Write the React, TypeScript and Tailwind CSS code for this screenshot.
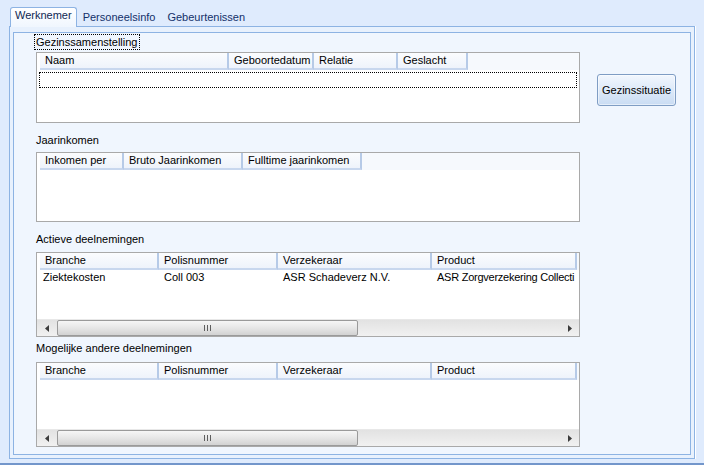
import React from 'react';

type Col = { title: string; w: number };

const famCols: Col[] = [
    { title: 'Naam', w: 189 },
    { title: 'Geboortedatum', w: 85 },
    { title: 'Relatie', w: 84 },
    { title: 'Geslacht', w: 70 },
];

const incomeCols: Col[] = [
    { title: 'Inkomen per', w: 84 },
    { title: 'Bruto Jaarinkomen', w: 119 },
    { title: 'Fulltime jaarinkomen', w: 119 },
];

const polisCols: Col[] = [
    { title: 'Branche', w: 119 },
    { title: 'Polisnummer', w: 119 },
    { title: 'Verzekeraar', w: 154 },
    { title: 'Product', w: 145 },
];

// laatste kolom is in het origineel afgekapt
const activeRows = [['Ziektekosten', 'Coll 003', 'ASR Schadeverz N.V.', 'ASR Zorgverzekering Collecti']];

function HScroll() {
    return (
        <div className="mt-auto h-[17px] flex items-center bg-linear-to-b from-[#e2e2e2] to-[#f1f1f1] border-t border-t-[#e8e8e8]">
            <div className="w-[20px] h-full flex items-center justify-center">
                <svg width="4" height="7" viewBox="0 0 4 7">
                    <path d="M4 0 L0 3.5 L4 7 Z" fill="#3c3c3c" />
                </svg>
            </div>
            <div className="w-[301px] h-[16px] rounded-[2px] border border-[#9a9a9a] bg-linear-to-b from-[#f6f6f6] via-[#e6e6e6] to-[#d2d2d2] flex items-center justify-center gap-[2px]">
                <span className="w-px h-[6px] bg-[#5e5e5e]" />
                <span className="w-px h-[6px] bg-[#5e5e5e]" />
                <span className="w-px h-[6px] bg-[#5e5e5e]" />
            </div>
            <div className="flex-1" />
            <div className="w-[18px] h-full flex items-center justify-center">
                <svg width="4" height="7" viewBox="0 0 4 7">
                    <path d="M0 0 L4 3.5 L0 7 Z" fill="#3c3c3c" />
                </svg>
            </div>
        </div>
    );
}

function ListView({
    cols,
    rows = [],
    height,
    focusRow = false,
    scroll = false,
}: {
    cols: Col[];
    rows?: string[][];
    height: string;
    focusRow?: boolean;
    scroll?: boolean;
}) {
    return (
        <div className={`w-[544px] ${height} border border-[#a9a9a9] bg-white flex flex-col overflow-hidden`}>
            <div className="h-[17px] shrink-0 flex pl-[3px] bg-white">
                {cols.map(c => (
                    <div
                        key={c.title}
                        style={{ width: c.w }}
                        className="shrink-0 h-full pl-[5px] leading-[15px] whitespace-nowrap overflow-hidden bg-linear-to-b from-[#fbfcfe] to-[#eef3fb] border-b-2 border-b-[#c8d7ee] border-r-2 border-r-[#b6cae7]"
                    >
                        {c.title}
                    </div>
                ))}
                <div className="flex-1 h-full bg-[#f6f9fd]" />
            </div>
            {focusRow && <div className="mt-[2px] mx-[2px] h-[16px] border border-dotted border-black" />}
            {rows.map((r, i) => (
                <div key={i} className="h-[16px] flex pl-[3px] leading-[14px]">
                    {r.map((v, j) => (
                        <div
                            key={j}
                            style={{ width: cols[j].w }}
                            className={`shrink-0 whitespace-nowrap ${j === 0 ? 'pl-[3px]' : 'pl-[5px]'} ${
                                j === r.length - 1 ? 'tracking-[-0.25px]' : 'overflow-hidden'
                            }`}
                        >
                            {v}
                        </div>
                    ))}
                </div>
            ))}
            {scroll && <HScroll />}
        </div>
    );
}

export default function App() {
    return (
        <div className="w-[704px] h-[465px] bg-[#dfebfd] flex flex-col overflow-hidden text-[11px] text-black font-['Liberation_Sans',Arial,sans-serif]">
            {/* tabbladen */}
            <div className="h-[26px] shrink-0 flex items-end pl-[10px] relative z-10">
                <div className="h-[20px] -mb-px px-[4px] pt-[1px] leading-[13px] border border-b-0 border-[#8db3e3] rounded-t-[3px] bg-linear-to-b from-white to-[#f0f6fe] text-[#0f2752]">
                    Werknemer
                </div>
                <div className="h-[15px] ml-[6px] leading-[13px] text-[#13306a]">Personeelsinfo</div>
                <div className="h-[15px] ml-[12px] leading-[13px] text-[#13306a]">Gebeurtenissen</div>
            </div>

            {/* tabpagina */}
            <div className="ml-[9px] w-[686px] h-[433px] shrink-0 border border-[#8db3e3] bg-[#e8f1fd] shadow-[1px_0_0_#ffffff]">
                <div className="ml-[3px] mt-[5px] w-[678px] h-[423px] border border-[#8db3e3] bg-[#f0f6fe] pl-[22px] flex">
                    <div className="w-[544px] flex flex-col">
                        <div className="mt-[1px] -ml-[2px] self-start h-[16px] px-[1px] leading-[14px] border border-dotted border-black">
                            Gezinssamenstelling
                        </div>
                        <div className="mt-[2px]">
                            <ListView cols={famCols} height="h-[71px]" focusRow />
                        </div>

                        <div className="mt-[11px] h-[13px] leading-[13px]">Jaarinkomen</div>
                        <div className="mt-[5px]">
                            <ListView cols={incomeCols} height="h-[70px]" />
                        </div>

                        <div className="mt-[11px] h-[13px] leading-[13px]">Actieve deelnemingen</div>
                        <div className="mt-[6px]">
                            <ListView cols={polisCols} rows={activeRows} height="h-[85px]" scroll />
                        </div>

                        <div className="mt-[5px] h-[13px] leading-[13px]">Mogelijke andere deelnemingen</div>
                        <div className="mt-[7px]">
                            <ListView cols={polisCols} height="h-[85px]" scroll />
                        </div>
                    </div>

                    <div className="ml-[17px] mt-[41px]">
                        <button className="w-[79px] h-[32px] rounded-[3px] border border-[#7f9dc4] bg-linear-to-b from-[#f2f7fe] to-[#c9dcf3] text-black shadow-[inset_0_0_0_1px_#ffffff80]">
                            Gezinssituatie
                        </button>
                    </div>
                </div>
            </div>

            <div className="mt-[4px] h-[2px] shrink-0 bg-[#7396cb]" />
        </div>
    );
}
